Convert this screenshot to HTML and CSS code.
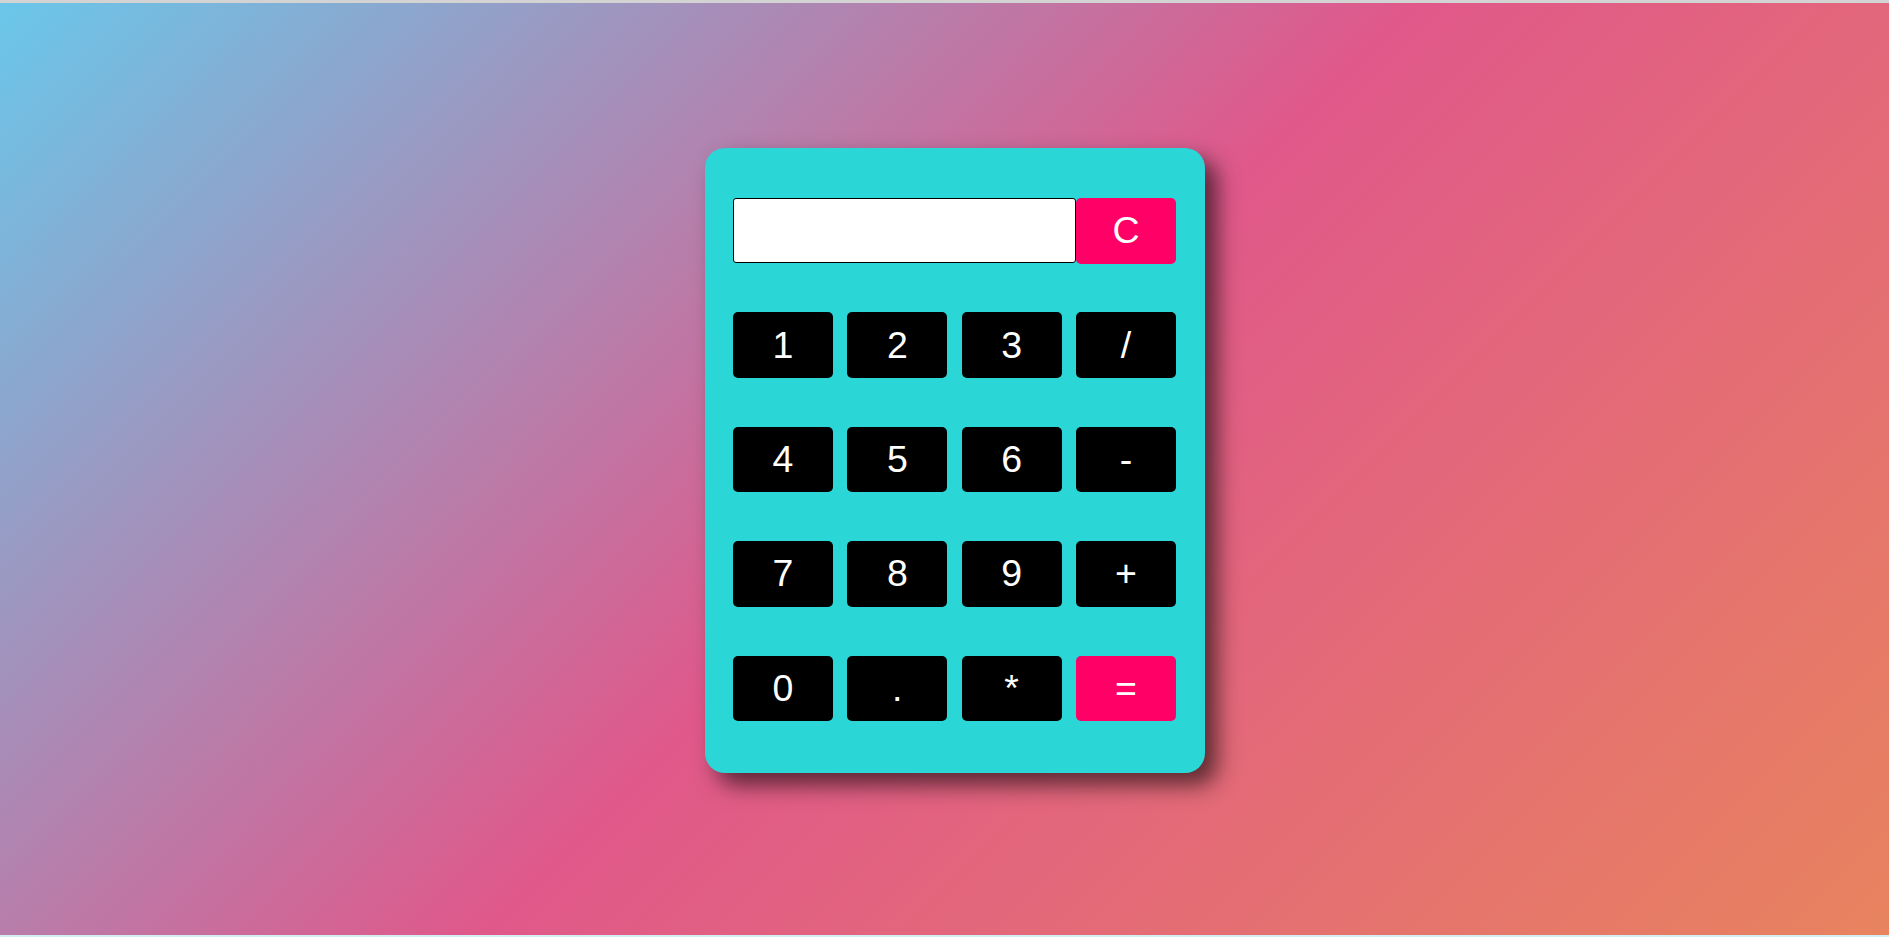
FILE: index.html
```html
<!DOCTYPE html>
<html>
<head>
<meta charset="utf-8">
<title>Calculator</title>
<link rel="stylesheet" href="styles.css">
</head>
<body>
<div class="page">
  <div class="calculator">
    <div class="display-row">
      <input class="display" type="text">
      <button class="key key-accent">C</button>
    </div>
    <button class="key">1</button>
    <button class="key">2</button>
    <button class="key">3</button>
    <button class="key">/</button>
    <button class="key">4</button>
    <button class="key">5</button>
    <button class="key">6</button>
    <button class="key">-</button>
    <button class="key">7</button>
    <button class="key">8</button>
    <button class="key">9</button>
    <button class="key">+</button>
    <button class="key">0</button>
    <button class="key">.</button>
    <button class="key">*</button>
    <button class="key key-accent">=</button>
  </div>
</div>
</body>
</html>
```
FILE: styles.css
```css
html, body {
  margin: 0;
  padding: 0;
}
body {
  font-family: "Liberation Sans", Arial, sans-serif;
  background: #d2eef2;
}
.page {
  box-sizing: border-box;
  height: 935px;
  border-top: 3px solid #d3d3d3;
  background: linear-gradient(135deg, #69c7ea 0%, #e0588a 50%, #e8835e 100%);
  display: flex;
  justify-content: center;
  align-items: flex-start;
  padding-top: 145px;
  padding-left: 21px;
}
.calculator {
  box-sizing: border-box;
  width: 500px;
  height: 625px;
  padding: 50px 29px 51px 28px;
  background: #2bd6d6;
  border-radius: 20px;
  box-shadow: 12px 12px 22px rgba(0, 0, 0, 0.6);
  display: grid;
  grid-template-columns: repeat(4, 100px);
  grid-auto-rows: 65.5px;
  justify-content: space-between;
  row-gap: 48.9px;
}
.display-row {
  grid-column: 1 / -1;
  display: flex;
}
.display {
  flex: 1;
  min-width: 0;
  box-sizing: border-box;
  margin: 0;
  height: 65px;
  border: 1px solid #000;
  border-radius: 3px;
  background: #fff;
  font-family: inherit;
  font-size: 30px;
  padding: 0 10px;
}
.display-row .key {
  width: 100px;
  height: 65.5px;
  flex: none;
}
.key {
  box-sizing: border-box;
  margin: 0;
  padding: 0;
  border: none;
  border-radius: 5px;
  background: #000;
  color: #fff;
  font-family: "Liberation Sans", Arial, sans-serif;
  font-size: 37.5px;
  line-height: normal;
  cursor: pointer;
}
.key-accent {
  background: #ff0066;
}
```
